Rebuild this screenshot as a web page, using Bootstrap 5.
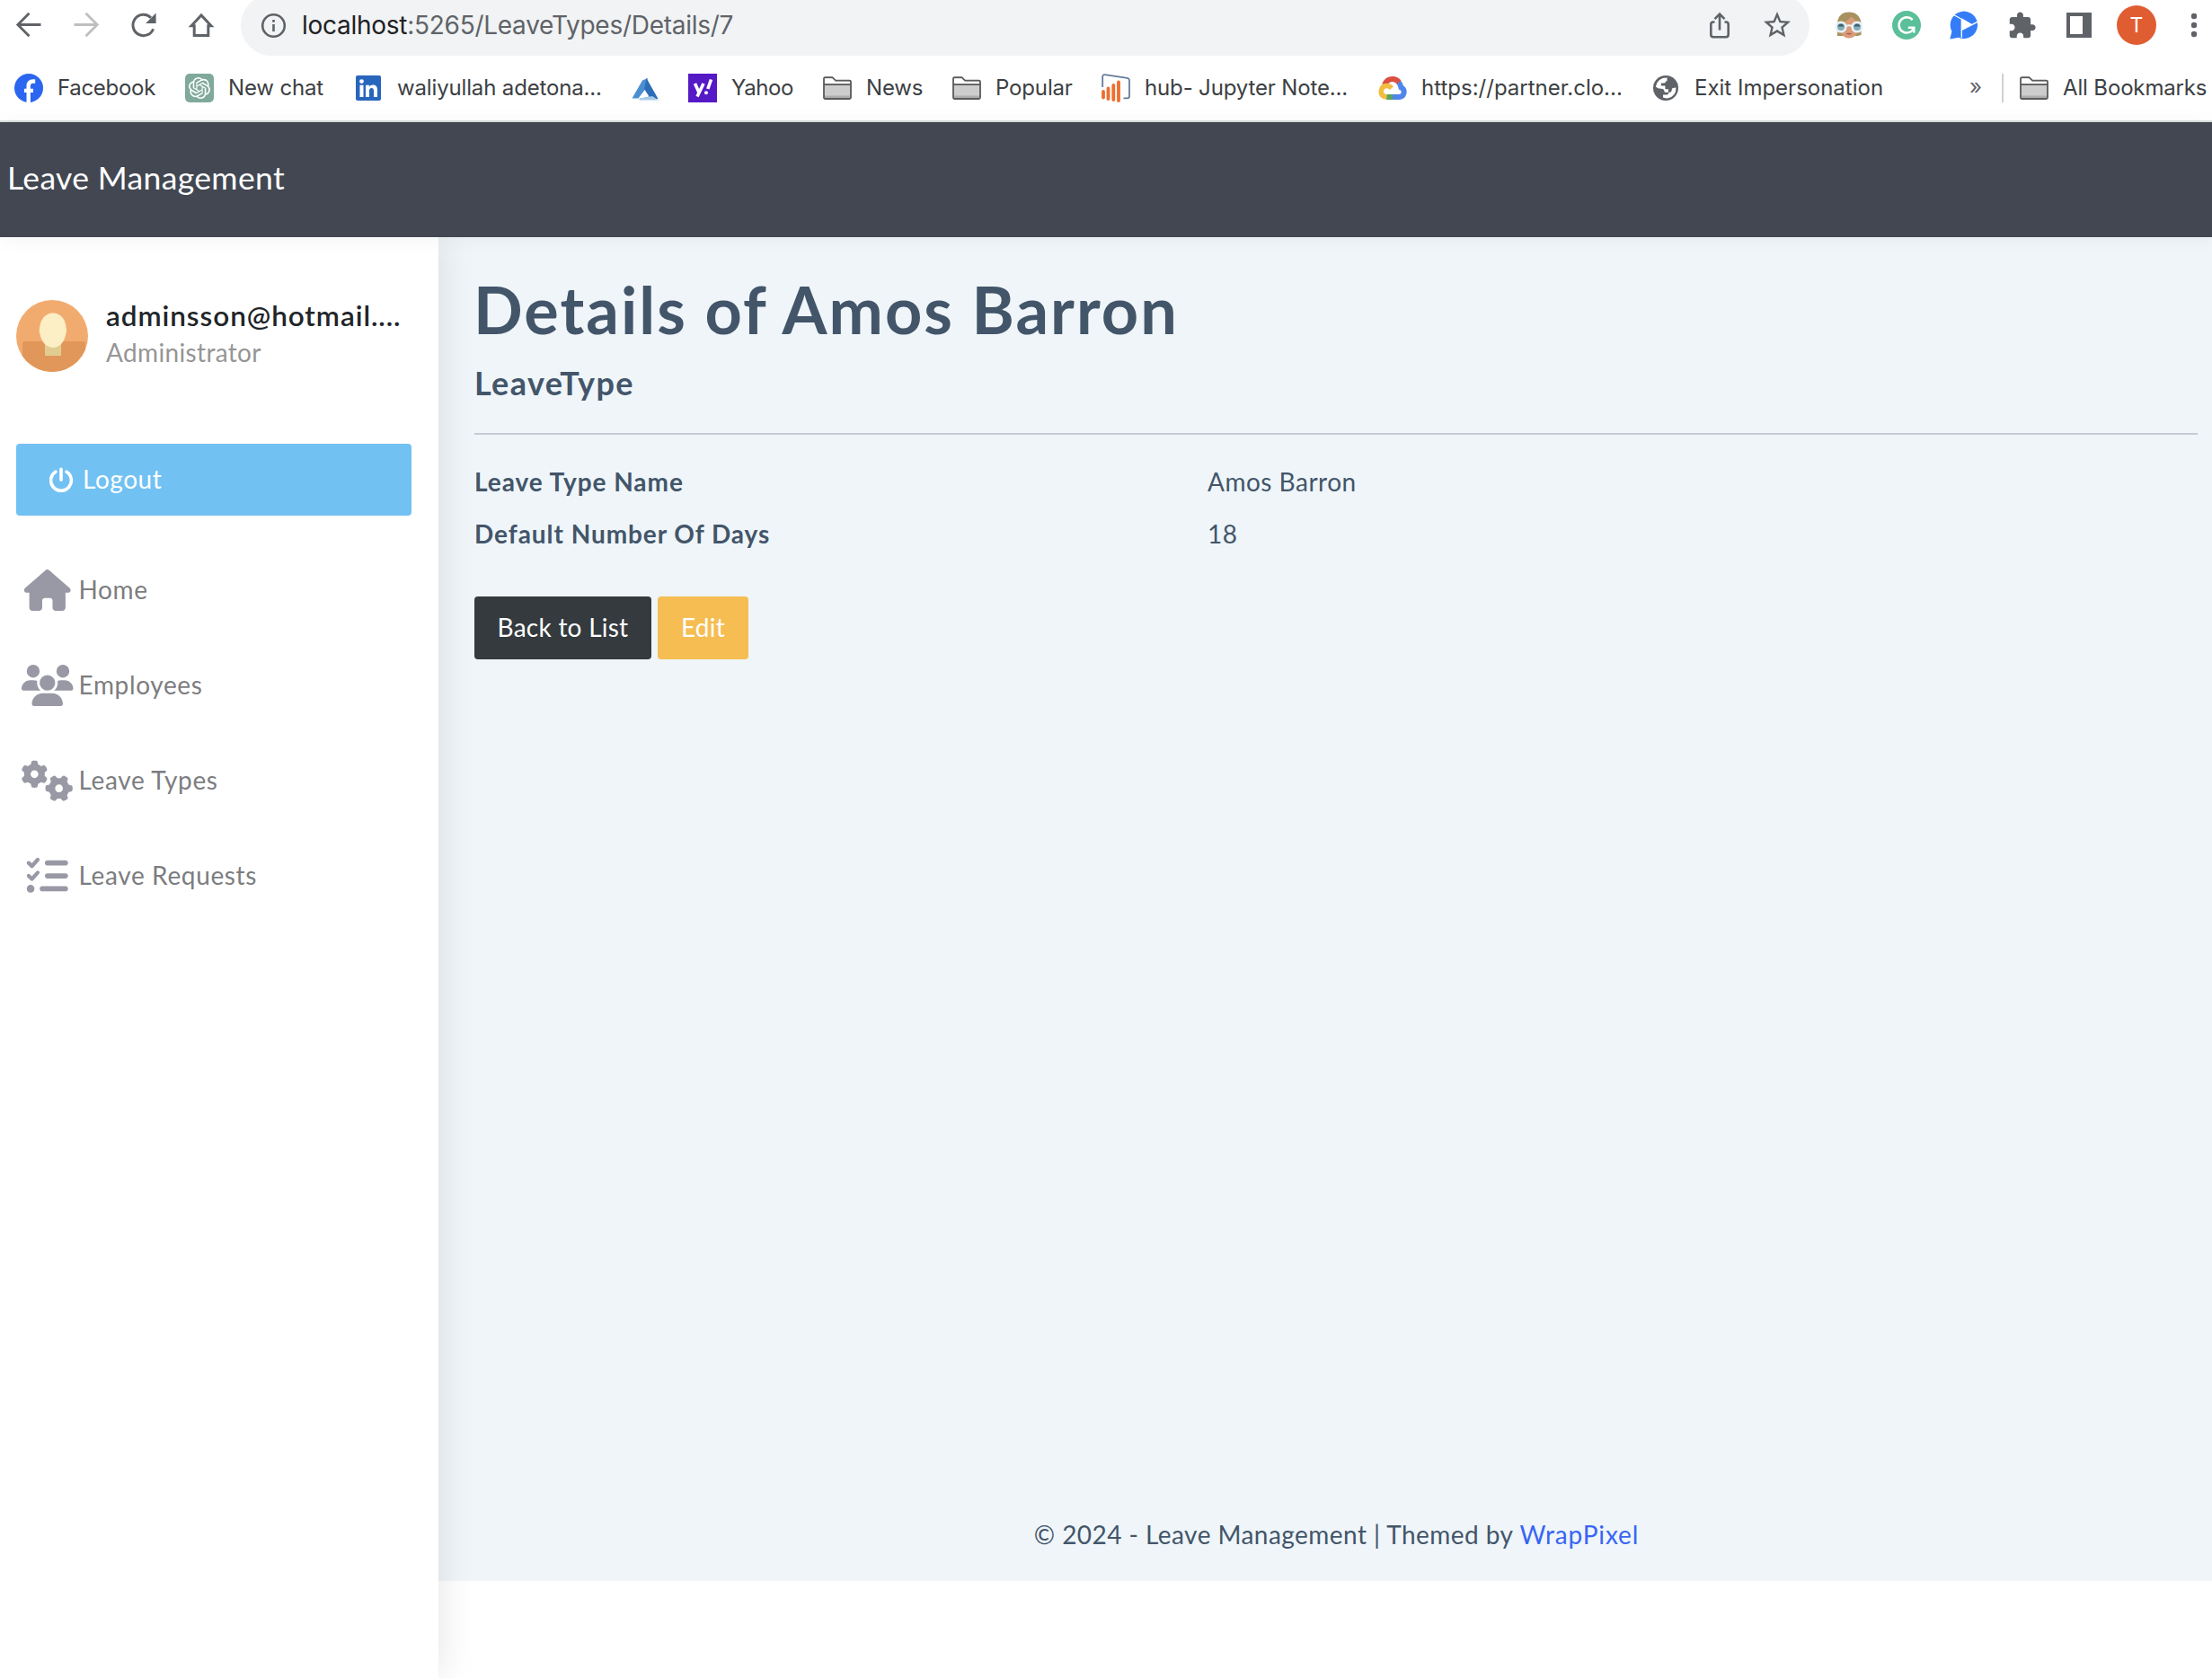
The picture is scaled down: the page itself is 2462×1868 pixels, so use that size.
<!DOCTYPE html>
<html lang="en">
<head>
<meta charset="utf-8">
<title>Details - Leave Management</title>
<link href="https://cdn.jsdelivr.net/npm/bootstrap@5.3.0/dist/css/bootstrap.min.css" rel="stylesheet">
<style>
  body { height: 1868px; overflow: hidden; background: #fff; color: #435569; font-family: Lato, "Open Sans", sans-serif; font-size: 28px; line-height: 42px; letter-spacing: .64px; }
  svg { flex: none; display: block; }
  a { text-decoration: none; }

  /* browser chrome */
  .chrome { height: 136px; border-bottom: 2px solid #dadfde; font-family: Inter, Roboto, sans-serif; color: #3c4043; letter-spacing: -.15px; flex: none; overflow: hidden; }
  .toolbar { height: 56px; }
  .slot { width: 64px; flex: none; display: flex; justify-content: center; align-items: center; }
  .omnibox { width: 1746px; height: 68px; margin: 0 12px; padding: 0 4px 0 22px; border-radius: 34px; background: #f1f3f4; flex: none; font-size: 28px; letter-spacing: -.27px; color: #5f6368; }
  .omnibox .host { color: #202124; }
  .url { margin-left: 17px; }
  .profile-dot { width: 44px; height: 44px; background: #e05d32; color: #fff; font-size: 23px; letter-spacing: 0; }
  .bookmarks { height: 72px; margin-top: 6px; padding-left: 16px; font-size: 24px; line-height: 32px; }
  .bm { display: flex; align-items: center; gap: 16px; margin-right: 32px; flex: none; white-space: nowrap; color: inherit; }
  .bm span { padding-bottom: 1px; }
  .w64 { width: 64px; } .w70 { width: 70px; letter-spacing: -.4px; } .w86 { width: 86px; } .w108 { width: 108px; } .w110 { width: 110px; letter-spacing: -.3px; }
  .w166 { width: 166px; } .w210 { width: 210px; letter-spacing: 0; } .w224 { width: 224px; letter-spacing: 0; } .w228 { width: 228px; }
  .more { margin-left: 64px; width: 15px; color: #5f6368; font-size: 24px; padding-bottom: 3px; }
  .rule { width: 2px; height: 32px; background: #cfd1d4; margin: 0 18px 0 21px; flex: none; }

  /* application */
  .topbar { height: 128px; background: #424752; color: #fff; font-size: 35.5px; letter-spacing: .36px; padding: 0 0 4px 8px; box-shadow: 0 2px 20px rgba(0,0,0,.05); z-index: 3; flex: none; }
  .side { width: 488px; padding: 67px 30px 0 18px; background: #fff; box-shadow: 2px 0 40px rgba(0,0,0,.1); z-index: 2; flex: none; }
  .avatar { width: 80px; height: 80px; margin-top: 3px; }
  .who { margin-left: 20px; height: 83px; line-height: 40px; white-space: nowrap; }
  .who-name { font-size: 31.5px; font-weight: 600; color: #212529; letter-spacing: .93px; }
  .who-role { color: #959595; letter-spacing: .35px; padding-top: 1px; }
  .logout { height: 80px; margin-top: 80px; border-radius: 4px; background: #72c1f3; color: #fff; padding-left: 37px; letter-spacing: .55px; }
  .logout:hover { color: #fff; }
  .logout span, .menu span { padding-bottom: 3px; }
  .logout span { padding-left: 9px; }
  .menu { margin-top: 30px; }
  .menu a { height: 106px; padding-left: 6px; gap: 6px; color: #7c7d80; }
  .menu svg { fill: #9899a5; width: 57.5px; height: 46px; }
  .page-body { height: 1496px; padding: 37px 16px 31px 40px; background: #eff5f9; }
  .page-title { font-size: 72px; line-height: 86px; font-weight: 700; letter-spacing: 2.05px; margin: 0 0 0 -1px; }
  .page-sub { font-size: 36px; line-height: 44px; font-weight: 700; letter-spacing: 1.35px; margin: 17px 0 34px; }
  .line { height: 2px; background: #c3ccd4; margin-bottom: 31px; }
  .fields dt { width: 816px; flex: none; letter-spacing: .95px; }
  .fields > div { margin-bottom: 16px; }
  .fields dd { margin: 0; letter-spacing: .5px; }
  .actions { gap: 7px; margin-top: 33px; }
  .btn-app { height: 70px; padding: 0 0 3px; border: 0; border-radius: 4px; font-size: 28px; letter-spacing: .25px; color: #fff; display: inline-flex; align-items: center; justify-content: center; }
  .btn-app:hover { color: #fff; }
  .b-list { width: 197px; background: #343a3e; }
  .b-edit { width: 101px; background: #f5bd52; }
  .foot { padding-left: 1px; letter-spacing: .45px; }
  .foot a { color: #3866f2; letter-spacing: .85px; }
</style>
<script src="https://cdn.jsdelivr.net/npm/bootstrap@5.3.0/dist/js/bootstrap.bundle.min.js"></script>
</head>
<body class="d-flex flex-column">
<svg width="0" height="0" class="position-absolute">
  <defs>
    <symbol id="folder" viewBox="0 0 32 32">
      <path d="M1.2 26.5V6.3q0-1.5 1.5-1.5H11l3.5 3.4h14.800q1.500 0 1.500 1.500V26.500q0 1.500-1.500 1.500H2.700q-1.500 0-1.500-1.500z" fill="#cdcdcd"/>
      <path d="M2 11V5.600h9l3.300 3.400H30V11z" fill="#fff"/>
      <path d="M2 24.500h28v3H2z" fill="#adadad"/>
      <path d="M1 26.500V5.500q0-1.300 1.300-1.300H10.500l3.600 3.400H29.500q1.500 0 1.500 1.500V26.500q0 1.500-1.500 1.500H2.500Q1 28 1 26.500zM1 12.200h30" fill="none" stroke="#5a5a5a" stroke-width="1.800"/>
    </symbol>
    <path id="gear" d="M308.500 135.300c7.100-6.300 9.900-16.200 6.200-25c-2.300-5.300-4.800-10.500-7.600-15.500L304 89.400c-3-5-6.300-9.900-9.800-14.600c-5.700-7.600-15.700-10.100-24.700-7.100l-28.200 9.300c-10.700-8.800-23-16-36.200-20.900L199 27.100c-1.900-9.300-9.100-16.700-18.500-17.800C173.900 8.400 167.200 8 160.400 8l-.7 0c-6.800 0-13.500 .4-20.100 1.200c-9.400 1.100-16.600 8.600-18.500 17.800L115 56.100c-13.300 5-25.500 12.100-36.200 20.900L50.500 67.800c-9-3-19-.5-24.700 7.100c-3.500 4.700-6.800 9.600-9.900 14.600l-3 5.300c-2.800 5-5.300 10.200-7.600 15.600c-3.700 8.700-.9 18.600 6.200 25l22.200 19.800C32.600 161.900 32 168.900 32 176s.6 14.100 1.700 20.900L11.500 216.700c-7.100 6.300-9.900 16.200-6.200 25c2.300 5.300 4.800 10.500 7.600 15.600l3 5.200c3 5.100 6.300 9.900 9.900 14.600c5.700 7.600 15.700 10.100 24.700 7.100l28.200-9.300c10.700 8.800 23 16 36.200 20.900l6.100 29.100c1.900 9.300 9.100 16.700 18.500 17.800c6.700 .8 13.500 1.200 20.400 1.200s13.700-.4 20.400-1.200c9.400-1.100 16.600-8.600 18.500-17.800l6.100-29.100c13.300-5 25.500-12.100 36.200-20.900l28.200 9.300c9 3 19 .5 24.700-7.100c3.500-4.700 6.800-9.500 9.800-14.600l3.100-5.400c2.800-5 5.300-10.200 7.600-15.500c3.700-8.700 .9-18.600-6.200-25l-22.200-19.800c1.100-6.800 1.700-13.800 1.700-20.900s-.6-14.100-1.700-20.900l22.200-19.800zM112 176a48 48 0 1 1 96 0 48 48 0 1 1 -96 0z"/>
  </defs>
</svg>

<header class="chrome">
  <div class="toolbar d-flex align-items-center">
    <div class="slot"><svg width="32" height="32" viewBox="0 0 32 32" fill="none" stroke="#5f6368" stroke-width="2.800"><path d="M29.500 15.500H4.500M16.500 2.800 3.800 15.500 16.500 28.200"/></svg></div>
    <div class="slot"><svg width="32" height="32" viewBox="0 0 32 32" fill="none" stroke="#bdbfc1" stroke-width="2.800"><path d="M2.500 15.500h25M15.500 2.800l12.700 12.700L15.500 28.200"/></svg></div>
    <div class="slot"><svg width="32" height="32" viewBox="0 0 32 32"><path d="M26.600 20.200A11.700 11.700 0 1 1 24 7.700" fill="none" stroke="#5f6368" stroke-width="3"/><path d="M29.600 2.500V14H18.100z" fill="#5f6368"/></svg></div>
    <div class="slot"><svg width="32" height="32" viewBox="0 0 32 32" fill="none" stroke="#5f6368" stroke-width="3"><path d="M5 16.700 16 5l11 11.700h-3.200V27.500H8.200V16.700z"/></svg></div>
    <div class="omnibox d-flex align-items-center">
      <svg width="29" height="29" viewBox="0 0 29 29"><circle cx="14.500" cy="14.500" r="12.300" fill="none" stroke="#5f6368" stroke-width="2.600"/><path d="M13.200 13h2.600v8h-2.600zM13.200 8h2.600v2.800h-2.600z" fill="#5f6368"/></svg>
      <div class="url"><span class="host">localhost</span>:5265/LeaveTypes/Details/7</div>
      <div class="slot ms-auto"><svg width="32" height="32" viewBox="0 0 32 32" fill="none" stroke="#5f6368" stroke-width="2.600"><path d="M10.500 12.500H9q-2.700 0-2.700 2.700V26.500Q6.300 29.200 9 29.200H23q2.700 0 2.700-2.700V15.200q0-2.700-2.700-2.700h-1.500M16 21.500V4M10.500 9.200 16 3.700l5.500 5.500"/></svg></div>
      <div class="slot"><svg width="36" height="36" viewBox="0 0 24 24" fill="#5f6368"><path d="M22 9.240l-7.190-.62L12 2 9.190 8.630 2 9.240l5.460 4.730L5.820 21 12 17.270 18.180 21l-1.630-7.030L22 9.240zM12 15.400l-3.760 2.270 1-4.280-3.320-2.880 4.380-.38L12 6.100l1.710 4.040 4.380.38-3.320 2.880 1 4.280L12 15.400z"/></svg></div>
    </div>
    <div class="slot"><svg width="32" height="32" viewBox="0 0 32 32"><path d="M3 28V14Q4 1.500 16 1.500T29.500 14V27l-4 1z" fill="#a8915f"/><path d="M5.500 15Q14 12 18.500 6.500q5 3.500 8 8.500-.5 15.500-10.500 15.500T5.500 15z" fill="#d89c78"/><path d="M12.500 25.600q3.500-1.600 7 0-3.500 2-7 0z" fill="#b4574f"/><path d="M12 17.500q4-2.500 8 0" fill="none" stroke="#eef4f7" stroke-width="2.200"/><g fill="#86acb9" stroke="#e9f1f5" stroke-width="2.600"><circle cx="7" cy="18" r="5.300"/><circle cx="25" cy="18" r="5.300"/></g><path d="M3.500 17.500a3.600 3.600 0 0 1 7 0zM21.500 17.500a3.600 3.600 0 0 1 7 0z" fill="#3f5f6c"/></svg></div>
    <div class="slot"><svg width="32" height="32" viewBox="0 0 32 32"><circle cx="16" cy="16" r="16" fill="#5bbf9a"/><path d="M22.600 10.200A8.600 8.600 0 1 0 24 19.500M17.800 18.800h6.500v5.800" fill="none" stroke="#fff" stroke-width="2.500"/></svg></div>
    <div class="slot"><svg width="34" height="34" viewBox="0 0 34 34"><path d="M1.300 32.500 3.500 24A15.200 15.200 0 1 1 11 30.800z" fill="#347df7"/><path d="M14.500 9.200v13L26 16.300z" fill="#fff"/><path d="M5.500 5.500 25.500 16.500M13.500 22.800 33 12.800M14.300 10v21" stroke="#fff" stroke-width="1.300"/></svg></div>
    <div class="slot"><svg width="33" height="33" viewBox="0 0 24 24" fill="#5f6368"><path d="M20.500 11H19V7c0-1.100-.9-2-2-2h-4V3.500C13 2.120 11.880 1 10.500 1S8 2.120 8 3.500V5H4c-1.100 0-1.990.9-1.990 2v3.800H3.500c1.490 0 2.700 1.210 2.700 2.700s-1.210 2.700-2.700 2.700H2V20c0 1.100.9 2 2 2h3.800v-1.500c0-1.490 1.210-2.700 2.700-2.700 1.490 0 2.700 1.210 2.700 2.700V22H17c1.100 0 2-.9 2-2v-4h1.500c1.380 0 2.500-1.120 2.500-2.500S21.880 11 20.500 11z"/></svg></div>
    <div class="slot"><svg width="28" height="28" viewBox="0 0 28 28"><path d="M0 0h28v28H0zM4 4v20h14V4z" fill="#5f6368" fill-rule="evenodd"/></svg></div>
    <div class="slot"><div class="profile-dot rounded-circle d-flex align-items-center justify-content-center">T</div></div>
    <div class="slot"><svg width="8" height="28" viewBox="0 0 8 28" fill="#5f6368"><circle cx="4" cy="4" r="3.200"/><circle cx="4" cy="14" r="3.200"/><circle cx="4" cy="24" r="3.200"/></svg></div>
  </div>

  <nav class="bookmarks d-flex align-items-center">
    <a class="bm" href="#"><svg width="32" height="32" viewBox="0 0 32 32"><circle cx="16" cy="16" r="16" fill="#2a66f0"/><path d="M15.700 32V19M10.900 18.900h10M15.700 19v-5.500q0-5 5-5h2.500" fill="none" stroke="#fff" stroke-width="4.400"/></svg><span class="w110">Facebook</span></a>
    <a class="bm" href="#"><svg width="32" height="32" viewBox="0 0 32 32"><rect width="32" height="32" rx="5" fill="#80a99c"/><path transform="translate(4 4)" fill="#fff" d="M22.2819 9.8211a5.9847 5.9847 0 0 0-.5157-4.9108 6.0462 6.0462 0 0 0-6.5098-2.9A6.0651 6.0651 0 0 0 4.9807 4.1818a5.9847 5.9847 0 0 0-3.9977 2.9 6.0462 6.0462 0 0 0 .7427 7.0966 5.98 5.98 0 0 0 .511 4.9107 6.051 6.051 0 0 0 6.5146 2.9001A5.9847 5.9847 0 0 0 13.2599 24a6.0557 6.0557 0 0 0 5.7718-4.2058 5.9894 5.9894 0 0 0 3.9977-2.9001 6.0557 6.0557 0 0 0-.7475-7.0729zm-9.022 12.6081a4.4755 4.4755 0 0 1-2.8764-1.0408l.1419-.0804 4.7783-2.7582a.7948.7948 0 0 0 .3927-.6813v-6.7369l2.02 1.1686a.071.071 0 0 1 .038.052v5.5826a4.504 4.504 0 0 1-4.4945 4.4944zm-9.6607-4.1254a4.4708 4.4708 0 0 1-.5346-3.0137l.142.0852 4.783 2.7582a.7712.7712 0 0 0 .7806 0l5.8428-3.3685v2.3324a.0804.0804 0 0 1-.0332.0615L9.74 19.9502a4.4992 4.4992 0 0 1-6.1408-1.6464zM2.3408 7.8956a4.485 4.485 0 0 1 2.3655-1.9728V11.6a.7664.7664 0 0 0 .3879.6765l5.8144 3.3543-2.0201 1.1685a.0757.0757 0 0 1-.071 0l-4.8303-2.7865A4.504 4.504 0 0 1 2.3408 7.872zm16.5963 3.8558L13.1038 8.364 15.1192 7.2a.0757.0757 0 0 1 .071 0l4.8303 2.7913a4.4944 4.4944 0 0 1-.6765 8.1042v-5.6772a.79.79 0 0 0-.407-.667zm2.0107-3.0231l-.142-.0852-4.7735-2.7818a.7759.7759 0 0 0-.7854 0L9.409 9.2297V6.8974a.0662.0662 0 0 1 .0284-.0615l4.8303-2.7866a4.4992 4.4992 0 0 1 6.6802 4.66zM8.3065 12.863l-2.02-1.1638a.0804.0804 0 0 1-.038-.0567V6.0742a4.4992 4.4992 0 0 1 7.3757-3.4537l-.142.0805L8.704 5.459a.7948.7948 0 0 0-.3927.6813zm1.0976-2.3654l2.602-1.4998 2.6069 1.4998v2.9994l-2.5974 1.4997-2.6067-1.4997Z"/></svg><span class="w108">New chat</span></a>
    <a class="bm" href="#"><svg width="32" height="32" viewBox="0 0 32 32"><rect x="2" y="2" width="28" height="28" rx="2" fill="#2866bd"/><g fill="#fff"><circle cx="8.500" cy="8.600" r="2.400"/><path d="M6.500 12.700h4V26h-4zM13 12.700h3.900v1.900c.8-1.300 2.200-2.200 4.200-2.200 3.900 0 4.900 2.500 4.900 6.200V26h-4v-6.600c0-1.900-.5-3.400-2.400-3.400-2 0-2.600 1.500-2.600 3.400V26h-4z"/></g></svg><span class="w228">waliyullah adetona...</span></a>
    <a class="bm" href="#"><svg width="32" height="32" viewBox="0 0 32 32"><path d="M13 7.500 19 5l-3 12.500L8.500 27.500H1.500z" fill="#4c8fd0"/><path d="M17.500 5 30.500 28H10l10.500-2.500L15 17z" fill="#2c6db8"/><path d="M9 27.800 24 25l7 4.500H10z" fill="#a5cbe8"/></svg></a>
    <a class="bm" href="#"><svg width="32" height="32" viewBox="0 0 32 32"><path d="M0 0h32v32H0z" fill="#5519c5"/><path d="M7.500 11l4.300 9.500M17 11 10 25.500M25.500 6.500 21.800 17" fill="none" stroke="#fff" stroke-width="3.600"/><circle cx="20" cy="21.300" r="2" fill="#fff"/></svg><span class="w70">Yahoo</span></a>
    <a class="bm" href="#"><svg width="32" height="32"><use href="#folder"/></svg><span class="w64">News</span></a>
    <a class="bm" href="#"><svg width="32" height="32"><use href="#folder"/></svg><span class="w86">Popular</span></a>
    <a class="bm" href="#"><svg width="32" height="32" viewBox="0 0 32 32" fill="none"><path d="M1.200 15V3.500Q1.200.8 3.700 1.100L28.500 4.800Q31 5.200 31 7.500V25q0 2.300-2.500 2.300H24.500" stroke="#657d99" stroke-width="1.800"/><path d="M2 20v6.500M7.500 16.500v11.500M13.300 13v16M19 9.500V30" stroke="#ec6f31" stroke-width="3.800" stroke-linecap="round"/></svg><span class="w228">hub- Jupyter Note...</span></a>
    <a class="bm" href="#"><svg width="32" height="32" viewBox="0 0 32 32" fill="none" stroke-width="6"><path d="M9 26H16.500" stroke="#58a55c"/><path d="M16 26h7.500a5.600 5.600 0 0 0 2-10.600Q24.800 11.500 22.300 9.300" stroke="#5086ec"/><path d="M7 12.500Q9.500 6 16 6q4 0 7.300 3.500" stroke="#d95040"/><path d="M9.500 26Q3 25.500 3.200 19.500 4 13.500 9.500 13.500q3 0 5.500 2.600" stroke="#f2be42" stroke-width="5.600"/></svg><span class="w224">https://partner.clo...</span></a>
    <a class="bm me-0" href="#"><svg width="32" height="32" viewBox="0 0 32 32"><circle cx="16" cy="16" r="14" fill="#5f6368"/><path d="M17.500 4.600Q7 4.500 4.800 14.500q2.700 2.500 6.200 2.300 3.700 0 3.700 4h4.200v-3.500h-3.500v-3.800h-4.600v-3h3.200q2.200 0 2.200-2.300h1.300zM27.400 15.500q.5 9.500-9 11.800-3 .4-5.400-.7v-3.200h4.600q1.700-.2 1.700-2.500 3.500 0 3.500-3.500-.2-1.700 4.600-1.900z" fill="#fff"/></svg><span class="w210">Exit Impersonation</span></a>
    <span class="more ms-auto">»</span>
    <div class="rule"></div>
    <a class="bm me-0" href="#"><svg width="32" height="32"><use href="#folder"/></svg><span class="w166">All Bookmarks</span></a>
  </nav>
</header>

<div class="topbar d-flex align-items-center">Leave Management</div>

<div class="d-flex flex-grow-1">
  <aside class="side">
    <div class="d-flex">
      <svg class="avatar" viewBox="0 0 80 80"><clipPath id="disc"><circle cx="40" cy="40" r="40"/></clipPath><g clip-path="url(#disc)"><path d="M0 0h80v80H0z" fill="#f2ab6f"/><path d="M7 80V48q0-2 2-2h66q2 0 2 2v32z" fill="#e2975a"/><path d="M32 44h18v18H32z" fill="#e1cd90"/><path d="M25.300 34q0-3 2-4h27q2 1 2 4t-3 4h-25q-3-1-3-4z" fill="#e8d79c"/><path d="M41 14.500c9 0 14.700 8 14.700 18.500S50 53 41 53 26 43.500 26 33s6-18.500 15-18.500z" fill="#fceec5"/></g></svg>
      <div class="who"><div class="who-name">adminsson@hotmail....</div><div class="who-role">Administrator</div></div>
    </div>
    <a class="logout d-flex align-items-center" href="#"><svg width="28" height="28" viewBox="0 0 28 28" fill="none" stroke="#fff" stroke-width="3.600" stroke-linecap="round"><path d="M6.900 5.200a11.400 11.400 0 1 0 12.200 0M13 2.200v12"/></svg><span>Logout</span></a>
    <nav class="menu d-flex flex-column">
      <a class="d-flex align-items-center" href="#"><svg viewBox="-32 0 640 512"><path d="M575.800 255.500c0 18-15 32.100-32 32.100l-32 0 .7 160.200c0 2.700-.2 5.400-.5 8.100l0 16.200c0 22.100-17.900 40-40 40l-16 0c-1.100 0-2.200 0-3.300-.1c-1.400 .1-2.800 .1-4.200 .1L416 512l-24 0c-22.100 0-40-17.900-40-40l0-24 0-64c0-17.700-14.300-32-32-32l-64 0c-17.700 0-32 14.300-32 32l0 64 0 24c0 22.100-17.900 40-40 40l-24 0-31.900 0c-1.500 0-3-.1-4.500-.2c-1.200 .1-2.400 .2-3.600 .2l-16 0c-22.100 0-40-17.900-40-40l0-112c0-.9 0-1.900 .1-2.800l0-69.700-32 0c-18 0-32-14-32-32.100c0-9 3-17 10-24L266.400 8c7-7 15-8 22-8s15 2 21 7L564.800 231.500c8 7 12 15 11 24z"/></svg><span>Home</span></a>
      <a class="d-flex align-items-center" href="#"><svg viewBox="0 0 640 512"><path d="M144 0a80 80 0 1 1 0 160A80 80 0 1 1 144 0zM512 0a80 80 0 1 1 0 160A80 80 0 1 1 512 0zM0 298.700C0 239.800 47.800 192 106.700 192l42.700 0c15.900 0 31 3.500 44.600 9.700c-1.300 7.200-1.900 14.700-1.900 22.300c0 38.200 16.800 72.500 43.300 96c-.2 0-.4 0-.7 0L21.300 320C9.600 320 0 310.400 0 298.700zM405.300 320c-.2 0-.4 0-.7 0c26.600-23.500 43.300-57.800 43.300-96c0-7.600-.7-15-1.900-22.300c13.600-6.300 28.700-9.700 44.600-9.700l42.700 0C592.200 192 640 239.800 640 298.700c0 11.800-9.600 21.300-21.300 21.300l-213.300 0zM224 224a96 96 0 1 1 192 0 96 96 0 1 1 -192 0zM128 485.300C128 411.700 187.700 352 261.300 352l117.300 0C452.300 352 512 411.700 512 485.300c0 14.700-11.900 26.700-26.700 26.700l-330.700 0c-14.700 0-26.700-11.900-26.700-26.700z"/></svg><span>Employees</span></a>
      <a class="d-flex align-items-center" href="#"><svg viewBox="0 0 640 512"><use href="#gear"/><use href="#gear" transform="translate(464 352) rotate(90) translate(-160 -176)"/></svg><span>Leave Types</span></a>
      <a class="d-flex align-items-center" href="#"><svg viewBox="-64 0 640 512"><path d="M152.100 38.200c9.900 8.900 10.700 24 1.800 33.900l-72 80c-4.400 4.900-10.600 7.800-17.200 7.900s-12.900-2.400-17.600-7L7 113C-2.300 103.600-2.300 88.400 7 79s24.600-9.400 33.900 0l22.100 22.100 55.100-61.200c8.900-9.900 24-10.700 33.900-1.800zm0 160c9.900 8.900 10.700 24 1.800 33.900l-72 80c-4.400 4.900-10.600 7.800-17.200 7.900s-12.900-2.400-17.600-7L7 273c-9.400-9.400-9.400-24.600 0-33.900s24.600-9.400 33.900 0l22.100 22.100 55.100-61.200c8.900-9.900 24-10.700 33.900-1.800zM224 96c0-17.700 14.300-32 32-32l224 0c17.700 0 32 14.300 32 32s-14.300 32-32 32l-224 0c-17.700 0-32-14.300-32-32zm0 160c0-17.700 14.300-32 32-32l224 0c17.700 0 32 14.300 32 32s-14.300 32-32 32l-224 0c-17.700 0-32-14.300-32-32zM160 416c0-17.700 14.300-32 32-32l288 0c17.700 0 32 14.300 32 32s-14.300 32-32 32l-288 0c-17.700 0-32-14.300-32-32zM48 368a48 48 0 1 1 0 96 48 48 0 1 1 0-96z"/></svg><span>Leave Requests</span></a>
    </nav>
  </aside>

  <main class="page-body flex-grow-1 d-flex flex-column">
    <h1 class="page-title">Details of Amos Barron</h1>
    <h4 class="page-sub">LeaveType</h4>
    <div class="line"></div>
    <dl class="fields mb-0">
      <div class="d-flex"><dt>Leave Type Name</dt><dd>Amos Barron</dd></div>
      <div class="d-flex"><dt>Default Number Of Days</dt><dd>18</dd></div>
    </dl>
    <div class="actions d-flex">
      <a class="btn btn-app b-list" href="#">Back to List</a>
      <a class="btn btn-app b-edit" href="#">Edit</a>
    </div>
    <footer class="foot text-center mt-auto">© 2024 - Leave Management | Themed by <a href="#">WrapPixel</a></footer>
  </main>
</div>
</body>
</html>
